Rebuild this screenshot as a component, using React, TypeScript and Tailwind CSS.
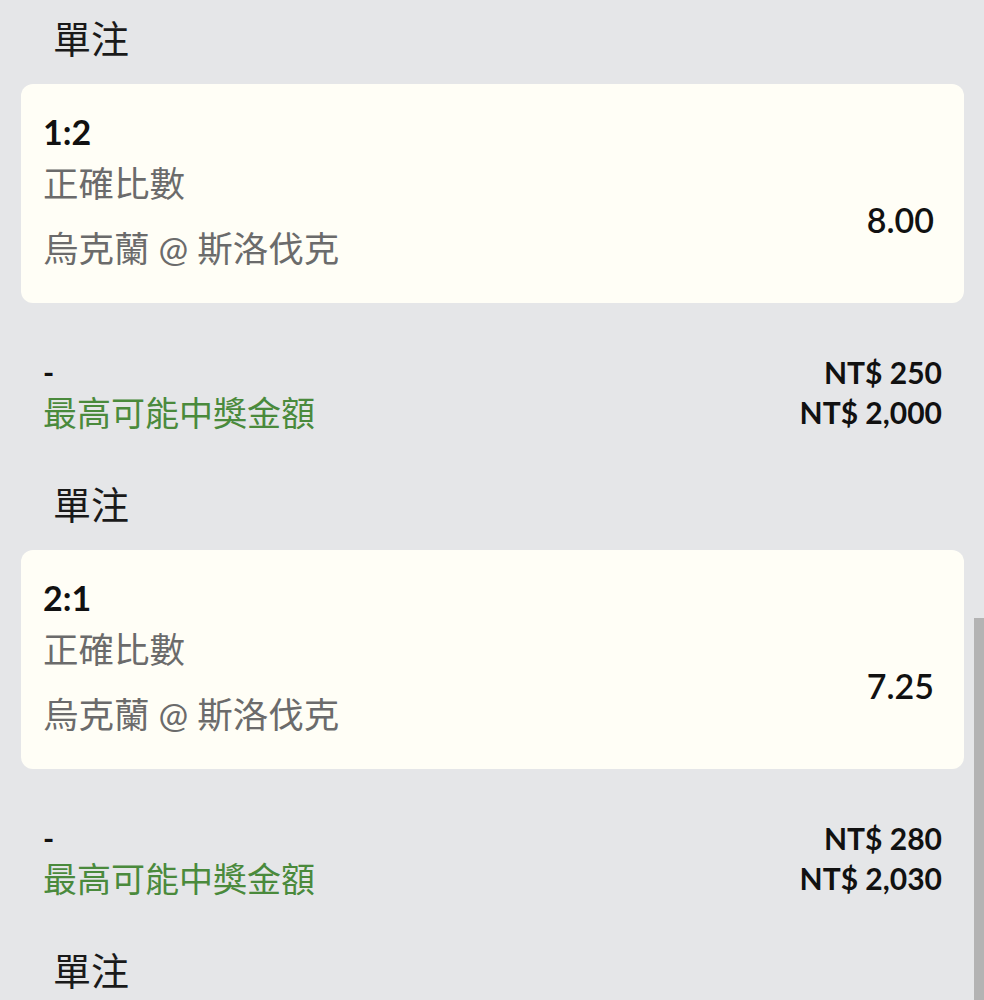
import React from 'react'

interface Bet {
  score: string
  market: string
  match: string
  odds: string
  stake: string
  payout: string
}

const bets: Bet[] = [
  { score: '1:2', market: '正確比數', match: '烏克蘭 @ 斯洛伐克', odds: '8.00', stake: 'NT$ 250', payout: 'NT$ 2,000' },
  { score: '2:1', market: '正確比數', match: '烏克蘭 @ 斯洛伐克', odds: '7.25', stake: 'NT$ 280', payout: 'NT$ 2,030' },
  { score: '2:2', market: '正確比數', match: '烏克蘭 @ 斯洛伐克', odds: '9.50', stake: 'NT$ 200', payout: 'NT$ 1,900' },
]

function BetSection({ bet }: { bet: Bet }) {
  return (
    <section>
      {/* header */}
      <div className="h-[84px] pb-2 flex items-center pl-[53px] text-[38px] leading-none text-[#1a1a1a]">單注</div>

      {/* card */}
      <div className="ml-[21px] mr-[20px] h-[219px] rounded-[12px] bg-[#fffef6] pl-[22px] pr-[30px] pt-[27px] pb-[34px] flex justify-between">
        <div className="flex flex-col">
          <div className="h-[40px] flex items-center text-[34px] font-bold text-[#111]">{bet.score}</div>
          <div className="h-[40px] mt-[13px] flex items-center text-[35.5px] text-[#6b6b6b]">{bet.market}</div>
          <div className="h-[40px] mt-[25px] flex items-center text-[35.5px] text-[#6b6b6b]">{bet.match}</div>
        </div>
        <div className="self-end mb-[30px] h-[40px] flex items-center text-[34px] font-semibold text-[#111]">{bet.odds}</div>
      </div>

      {/* totals */}
      <div className="pl-[43px] pr-[42px] pt-[49px] pb-[34px]">
        <div className="h-[40px] flex items-center justify-between">
          <span className="text-[30px] font-bold text-[#111]">-</span>
          <span className="text-[30px] font-bold text-[#111]">{bet.stake}</span>
        </div>
        <div className="h-[40px] flex items-center justify-between">
          <span className="text-[34px] text-[#4a8a3c]">最高可能中獎金額</span>
          <span className="text-[30px] font-bold text-[#111]">{bet.payout}</span>
        </div>
      </div>
    </section>
  )
}

export default function App() {
  return (
    <div
      className="relative h-[1000px] w-[984px] overflow-hidden bg-[#e5e6e8]"
      style={{ fontFamily: 'Lato, "Noto Sans CJK TC", sans-serif' }}
    >
      {bets.map((b, i) => (
        <BetSection key={i} bet={b} />
      ))}
      {/* scrollbar */}
      <div className="absolute right-0 top-[618px] bottom-0 w-[10px] bg-[#b3b3b3]" />
    </div>
  )
}
